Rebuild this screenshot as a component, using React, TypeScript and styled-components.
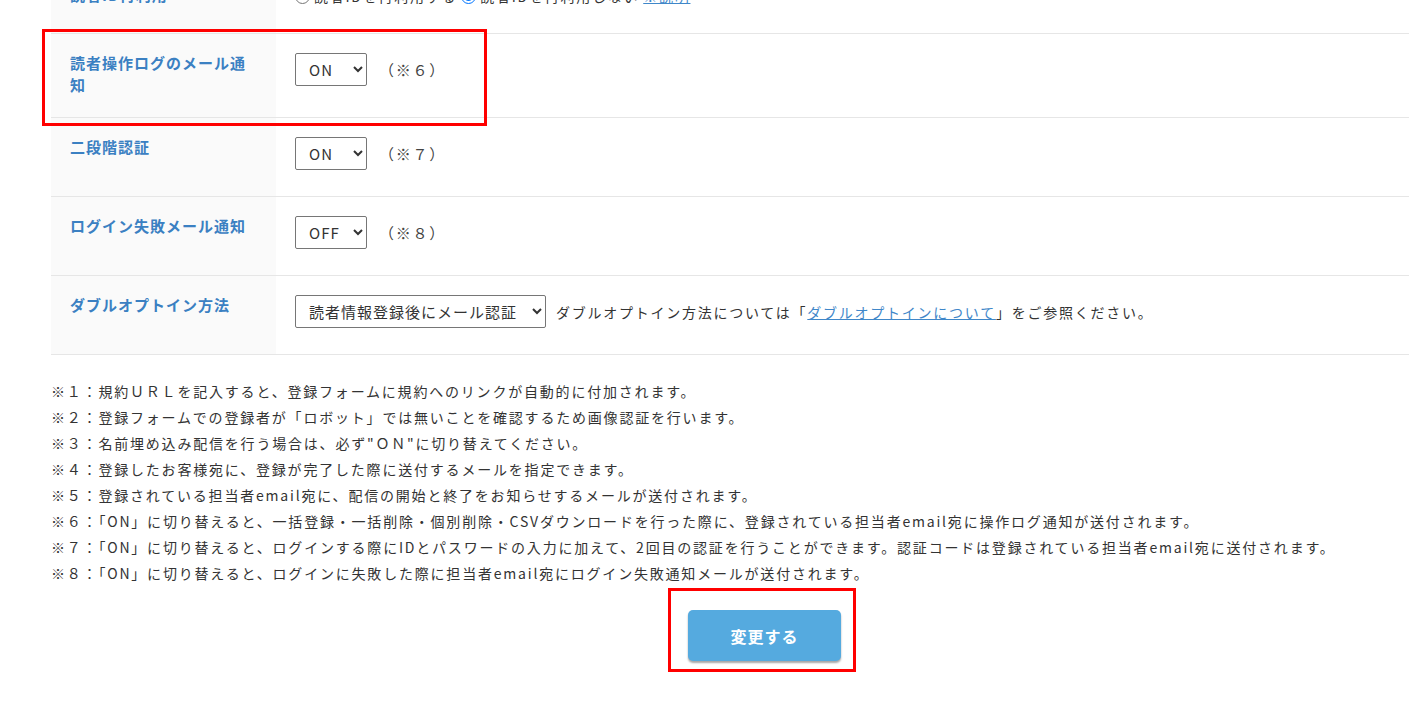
import React from "react";
import styled, { createGlobalStyle } from "styled-components";

const GlobalStyle = createGlobalStyle`
  html {
    overflow: hidden;
  }
  body {
    margin: 0;
    padding: 0;
    background: #fff;
    font-family: "Noto Sans CJK JP", "Noto Sans", sans-serif;
    color: #333;
  }
`;

const Page = styled.div`
  width: 1427px;
  margin-left: 51px;
  padding-bottom: 60px;
`;

const Table = styled.div`
  margin-top: -34px;
  display: flex;
  flex-direction: column;
`;

const Row = styled.div`
  position: relative;
  display: grid;
  grid-template-columns: 225px 1fr;
  border-bottom: 1px solid #e6e6e6;
`;

const Label = styled.div`
  background: #fafafa;
  padding: 18px 20px 21px 19px;
  color: #3b80c2;
  font-weight: 700;
  font-size: 15px;
  letter-spacing: 1px;
  line-height: 22px;
`;

const Value = styled.div<{ $gap?: number }>`
  display: flex;
  align-items: flex-start;
  gap: ${({ $gap }) => $gap ?? 12}px;
  padding: 19px 19px 26px 19px;
  font-size: 14px;
  letter-spacing: 1.75px;
`;

const Inline = styled.div<{ $h: number }>`
  display: flex;
  align-items: center;
  height: ${({ $h }) => $h}px;
  white-space: nowrap;
`;

const Select = styled.select<{ $w: number }>`
  width: ${({ $w }) => $w}px;
  height: 33px;
  padding: 0 4px 0 9px;
  border: 1px solid #767676;
  border-radius: 2px;
  background: #fff;
  color: #333;
  font-family: "Noto Sans CJK JP", "Noto Sans", sans-serif;
  font-size: 15px;
  letter-spacing: 1px;
`;

const Note = styled.span`
  color: #444;
  font-size: 15px;
`;

const RadioLabel = styled.label`
  display: inline-flex;
  align-items: center;
  gap: 4px;
  margin-right: 4px;
  input {
    margin: 0;
    width: 15px;
    height: 15px;
  }
`;

const Link = styled.a`
  color: #3f87c9;
  text-decoration: underline;
`;

const Highlight = styled.div<{ $l: number; $t: number; $w: number; $h: number }>`
  position: absolute;
  z-index: 2;
  left: ${({ $l }) => $l}px;
  top: ${({ $t }) => $t}px;
  width: ${({ $w }) => $w}px;
  height: ${({ $h }) => $h}px;
  border: 3px solid #f00;
  box-sizing: border-box;
  pointer-events: none;
`;

const Notes = styled.ul`
  list-style: none;
  margin: 23px 0 0;
  padding: 0;
  font-size: 14px;
  line-height: 26px;
  letter-spacing: 1.8px;
  color: #333;
  white-space: nowrap;
`;

const Footer = styled.div`
  display: flex;
  justify-content: center;
  margin-top: 24px;
`;

const ButtonWrap = styled.div`
  position: relative;
`;

const SubmitButton = styled.button`
  width: 153px;
  height: 51px;
  border: none;
  border-radius: 5px;
  background: #55aadf;
  box-shadow: 0 2px 2px rgba(0, 0, 0, 0.35);
  color: #fff;
  font-family: "Noto Sans CJK JP", "Noto Sans", sans-serif;
  font-weight: 700;
  font-size: 16px;
  letter-spacing: 1px;
  cursor: pointer;
`;

const onOff = ["ON", "OFF"];

const SwitchRow: React.FC<{ label: string; value: string; note: string; children?: React.ReactNode }> = ({
  label,
  value,
  note,
  children,
}) => (
  <Row>
    <Label>{label}</Label>
    <Value>
      <Select $w={72} defaultValue={value}>
        {onOff.map((o) => (
          <option key={o}>{o}</option>
        ))}
      </Select>
      <Inline $h={33}>
        <Note>{note}</Note>
      </Inline>
    </Value>
    {children}
  </Row>
);

const notes = [
  "※１：規約ＵＲＬを記入すると、登録フォームに規約へのリンクが自動的に付加されます。",
  "※２：登録フォームでの登録者が「ロボット」では無いことを確認するため画像認証を行います。",
  "※３：名前埋め込み配信を行う場合は、必ず\"ＯＮ\"に切り替えてください。",
  "※４：登録したお客様宛に、登録が完了した際に送付するメールを指定できます。",
  "※５：登録されている担当者email宛に、配信の開始と終了をお知らせするメールが送付されます。",
  "※６：「ON」に切り替えると、一括登録・一括削除・個別削除・CSVダウンロードを行った際に、登録されている担当者email宛に操作ログ通知が送付されます。",
  "※７：「ON」に切り替えると、ログインする際にIDとパスワードの入力に加えて、2回目の認証を行うことができます。認証コードは登録されている担当者email宛に送付されます。",
  "※８：「ON」に切り替えると、ログインに失敗した際に担当者email宛にログイン失敗通知メールが送付されます。",
];

export default function App() {
  return (
    <>
      <GlobalStyle />
      <Page>
        <Table>
          <Row>
            <Label>読者ID再利用</Label>
            <Value>
              <Inline $h={22}>
                <RadioLabel>
                  <input type="radio" name="reuse" />
                  読者IDを再利用する
                </RadioLabel>
                <RadioLabel>
                  <input type="radio" name="reuse" defaultChecked />
                  読者IDを再利用しない
                </RadioLabel>
                <Link href="#">※説明</Link>
              </Inline>
            </Value>
          </Row>
          <SwitchRow label="読者操作ログのメール通知" value="ON" note="（※６）">
            <Highlight $l={-9} $t={-5} $w={445} $h={97} />
          </SwitchRow>
          <SwitchRow label="二段階認証" value="ON" note="（※７）" />
          <SwitchRow label="ログイン失敗メール通知" value="OFF" note="（※８）" />
          <Row>
            <Label>ダブルオプトイン方法</Label>
            <Value $gap={10}>
              <Select $w={251} defaultValue="a">
                <option value="a">読者情報登録後にメール認証</option>
                <option value="b">メール認証後に読者情報登録</option>
              </Select>
              <Inline $h={33}>
                ダブルオプトイン方法については「<Link href="#">ダブルオプトインについて</Link>」をご参照ください。
              </Inline>
            </Value>
          </Row>
        </Table>
        <Notes>
          {notes.map((n) => (
            <li key={n}>{n}</li>
          ))}
        </Notes>
        <Footer>
          <ButtonWrap>
            <SubmitButton type="button">変更する</SubmitButton>
            <Highlight $l={-20} $t={-22} $w={188} $h={84} />
          </ButtonWrap>
        </Footer>
      </Page>
    </>
  );
}
